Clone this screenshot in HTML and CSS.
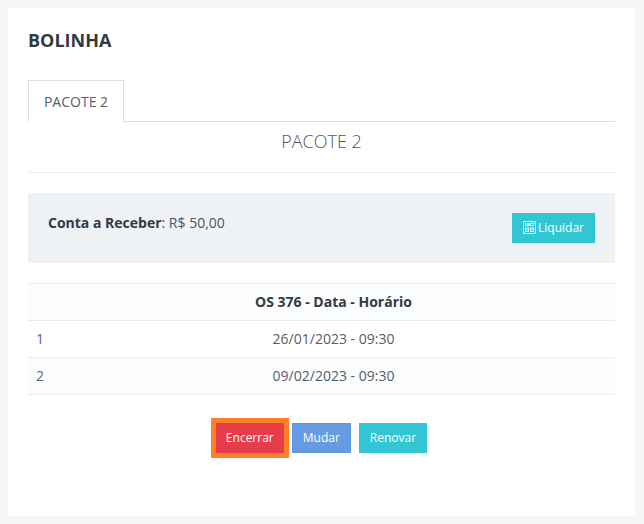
FILE: index.html
```html
<!DOCTYPE html>
<html lang="pt-BR">
<head>
<meta charset="utf-8">
<title>Bolinha</title>
<link rel="stylesheet" href="styles.css">
</head>
<body>
<div class="modal">
  <button class="close" aria-label="Fechar"><svg width="14" height="14" viewBox="0 0 14 14"><path d="M1 1 13 13M13 1 1 13" stroke="#6f7c8a" stroke-width="1.8" fill="none"/></svg></button>
  <h3 class="title">BOLINHA</h3>
  <ul class="tabs"><li class="tab">PACOTE 2</li></ul>
  <h4 class="pack">PACOTE 2</h4>
  <hr class="rule">
  <div class="panel">
    <p class="due"><strong>Conta a Receber</strong>: R$ 50,00</p>
    <button class="btn info settle"><svg class="calc" width="13" height="13" viewBox="0 0 13 13"><path d="M.5.5h12v12H.5z" fill="none" stroke="#e6fafc"/><path d="M2 2h9v3H2zM2 6.5h4V11H2zM7 6.5h4V11H7z" fill="#e6fafc"/><path d="M3.5 2.500v2M2.800 3.500h1.500M7.500 3.500h3M3 8h2M3 9.500h2M8 8h2M8 9.500h2" stroke="#32c6d4" stroke-width="1"/></svg>Liquidar</button>
  </div>
  <table class="grid">
    <thead><tr><th></th><th>OS 376 - Data - Horário</th></tr></thead>
    <tbody>
      <tr><td class="num">1</td><td class="when">26/01/2023 - 09:30</td></tr>
      <tr class="alt"><td class="num">2</td><td class="when">09/02/2023 - 09:30</td></tr>
    </tbody>
  </table>
  <div class="actions">
    <button class="btn danger focus">Encerrar</button>
    <button class="btn primary">Mudar</button>
    <button class="btn info">Renovar</button>
  </div>
</div>
</body>
</html>
```
FILE: styles.css
```css
* { box-sizing: border-box; }
html, body { margin: 0; height: 100%; }
body {
  background: #f6f6f6;
  padding: 8px 9px 8px 8px;
  font-family: "Open Sans", sans-serif;
  font-size: 14px;
  color: #4b5563;
  overflow: hidden;
}
.modal {
  position: relative;
  height: 508px;
  background: #fff;
  padding: 20px;
}
.close {
  position: absolute;
  top: -4px;
  right: -24px;
  width: 14px;
  height: 14px;
  padding: 0;
  border: 0;
  background: none;
  display: flex;
}
.title {
  margin: 0;
  height: 52px;
  padding-top: 0;
  font-size: 18px;
  line-height: 24px;
  font-weight: 700;
  color: #333a42;
}
.tabs {
  list-style: none;
  margin: 0;
  padding: 0;
  height: 42px;
  border-bottom: 1px solid #ddd;
  display: flex;
}
.tab {
  width: 96px;
  height: 42px;
  border: 1px solid #ddd;
  border-bottom-color: #fff;
  background: #fff;
  text-align: center;
  line-height: 41px;
  font-size: 14px;
  color: #555e68;
}
.pack {
  margin: 0;
  height: 39px;
  text-align: center;
  font-size: 18px;
  line-height: 39px;
  font-weight: 300;
  color: #555;
}
.rule {
  margin: 11px 0 20px;
  border: 0;
  border-top: 1px solid #eee;
}
.panel {
  height: 70px;
  background: #eff2f5;
  padding: 20px;
  display: flex;
  justify-content: space-between;
}
.due { margin: 0; line-height: 20px; color: #4b5563; }
.due strong { color: #333a42; }
.settle { margin-right: 0; }
.calc { margin-right: 2px; vertical-align: -2px; }
.btn {
  height: 30px;
  padding: 0 10px;
  border: 1px solid transparent;
  font-family: "Open Sans", sans-serif;
  font-size: 12px;
  line-height: 28px;
  color: #fff;
}
.info { background: #32c6d4; border-color: #32c6d4; }
.primary { background: #659be0; border-color: #5b93dc; }
.danger { background: #e73d4a; border-color: #e73d4a; }
.focus { outline: 5px solid #ff8026; outline-offset: 0; border-width: 0; }
.grid {
  width: 100%;
  margin-top: 20px;
  border-collapse: collapse;
}
.grid th, .grid td {
  height: 37px;
  padding: 8px;
  border-top: 1px solid #e7ecf1;
  border-bottom: 1px solid #e7ecf1;
  line-height: 20px;
}
.grid thead tr, .alt { background: #fbfcfd; }
.grid th { color: #333a42; font-weight: 700; text-align: center; }
.num { width: 10px; color: #4a6a8a; }
.when { text-align: center; color: #555e68; }
.actions {
  margin-top: 28px;
  display: flex;
  justify-content: center;
  gap: 8px;
}
```
